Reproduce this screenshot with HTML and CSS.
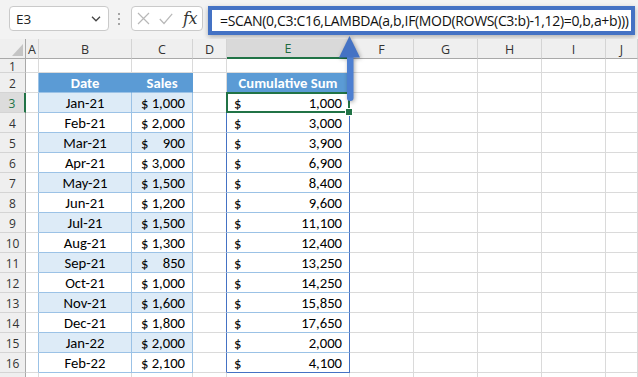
FILE: index.html
```html
<!DOCTYPE html>
<html>
<head>
<meta charset="utf-8">
<link rel="stylesheet" href="styles.css">
</head>
<body>
<div class="topbar">
  <div class="namebox"><span>E3</span>
    <svg class="chev" width="10" height="6" viewBox="0 0 10 6"><path d="M1 0.8 L5 4.8 L9 0.8" fill="none" stroke="#444" stroke-width="1.3"/></svg>
  </div>
  <div class="sep"><i></i><i></i><i></i></div>
  <div class="funcbox">
    <svg class="ico" width="13" height="13" viewBox="0 0 13 13"><path d="M1 1 L12 12 M12 1 L1 12" stroke="#b8b8b8" stroke-width="1.2" fill="none"/></svg>
    <svg class="ico chk" width="14" height="12" viewBox="0 0 14 12"><path d="M0.8 6 L5 10.5 L13.2 0.8" stroke="#b8b8b8" stroke-width="1.2" fill="none"/></svg>
    <span class="fx">fx</span>
  </div>
  <div class="formula">=SCAN(0,C3:C16,LAMBDA(a,b,IF(MOD(ROWS(C3:b)-1,12)=0,b,a+b)))</div>
</div>

<div class="sheet">
  <div class="c hd corner"><div class="tri"></div></div>
  <div class="c hd">A</div><div class="c hd">B</div><div class="c hd">C</div><div class="c hd">D</div><div class="c hd hsel">E</div><div class="c hd">F</div><div class="c hd">G</div><div class="c hd">H</div><div class="c hd">I</div><div class="c hd">J</div>

  <div class="c rh">1</div><div class="c"></div><div class="c"></div><div class="c"></div><div class="c"></div><div class="c"></div><div class="c"></div><div class="c"></div><div class="c"></div><div class="c"></div><div class="c"></div>

  <div class="c rh">2</div><div class="c tl"></div><div class="c th thb">Date</div><div class="c th">Sales</div><div class="c"></div><div class="c th">Cumulative Sum</div><div class="c"></div><div class="c"></div><div class="c"></div><div class="c"></div><div class="c"></div>

  <div class="c rh rsel">3</div><div class="c tl"></div><div class="c tb band">Jan-21</div><div class="c tb band acc ac"><span>$</span><span>1,000</span></div><div class="c el"></div><div class="c ec acc sel"><span>$</span><span>1,000</span></div><div class="c"></div><div class="c"></div><div class="c"></div><div class="c"></div><div class="c"></div>

  <div class="c rh">4</div><div class="c tl"></div><div class="c tb">Feb-21</div><div class="c tb acc ac"><span>$</span><span>2,000</span></div><div class="c el"></div><div class="c ec acc"><span>$</span><span>3,000</span></div><div class="c"></div><div class="c"></div><div class="c"></div><div class="c"></div><div class="c"></div>

  <div class="c rh">5</div><div class="c tl"></div><div class="c tb band">Mar-21</div><div class="c tb band acc ac"><span>$</span><span>900</span></div><div class="c el"></div><div class="c ec acc"><span>$</span><span>3,900</span></div><div class="c"></div><div class="c"></div><div class="c"></div><div class="c"></div><div class="c"></div>

  <div class="c rh">6</div><div class="c tl"></div><div class="c tb">Apr-21</div><div class="c tb acc ac"><span>$</span><span>3,000</span></div><div class="c el"></div><div class="c ec acc"><span>$</span><span>6,900</span></div><div class="c"></div><div class="c"></div><div class="c"></div><div class="c"></div><div class="c"></div>

  <div class="c rh">7</div><div class="c tl"></div><div class="c tb band">May-21</div><div class="c tb band acc ac"><span>$</span><span>1,500</span></div><div class="c el"></div><div class="c ec acc"><span>$</span><span>8,400</span></div><div class="c"></div><div class="c"></div><div class="c"></div><div class="c"></div><div class="c"></div>

  <div class="c rh">8</div><div class="c tl"></div><div class="c tb">Jun-21</div><div class="c tb acc ac"><span>$</span><span>1,200</span></div><div class="c el"></div><div class="c ec acc"><span>$</span><span>9,600</span></div><div class="c"></div><div class="c"></div><div class="c"></div><div class="c"></div><div class="c"></div>

  <div class="c rh">9</div><div class="c tl"></div><div class="c tb band">Jul-21</div><div class="c tb band acc ac"><span>$</span><span>1,500</span></div><div class="c el"></div><div class="c ec acc"><span>$</span><span>11,100</span></div><div class="c"></div><div class="c"></div><div class="c"></div><div class="c"></div><div class="c"></div>

  <div class="c rh">10</div><div class="c tl"></div><div class="c tb">Aug-21</div><div class="c tb acc ac"><span>$</span><span>1,300</span></div><div class="c el"></div><div class="c ec acc"><span>$</span><span>12,400</span></div><div class="c"></div><div class="c"></div><div class="c"></div><div class="c"></div><div class="c"></div>

  <div class="c rh">11</div><div class="c tl"></div><div class="c tb band">Sep-21</div><div class="c tb band acc ac"><span>$</span><span>850</span></div><div class="c el"></div><div class="c ec acc"><span>$</span><span>13,250</span></div><div class="c"></div><div class="c"></div><div class="c"></div><div class="c"></div><div class="c"></div>

  <div class="c rh">12</div><div class="c tl"></div><div class="c tb">Oct-21</div><div class="c tb acc ac"><span>$</span><span>1,000</span></div><div class="c el"></div><div class="c ec acc"><span>$</span><span>14,250</span></div><div class="c"></div><div class="c"></div><div class="c"></div><div class="c"></div><div class="c"></div>

  <div class="c rh">13</div><div class="c tl"></div><div class="c tb band">Nov-21</div><div class="c tb band acc ac"><span>$</span><span>1,600</span></div><div class="c el"></div><div class="c ec acc"><span>$</span><span>15,850</span></div><div class="c"></div><div class="c"></div><div class="c"></div><div class="c"></div><div class="c"></div>

  <div class="c rh">14</div><div class="c tl"></div><div class="c tb">Dec-21</div><div class="c tb acc ac"><span>$</span><span>1,800</span></div><div class="c el"></div><div class="c ec acc"><span>$</span><span>17,650</span></div><div class="c"></div><div class="c"></div><div class="c"></div><div class="c"></div><div class="c"></div>

  <div class="c rh">15</div><div class="c tl"></div><div class="c tb band">Jan-22</div><div class="c tb band acc ac"><span>$</span><span>2,000</span></div><div class="c el"></div><div class="c ec acc"><span>$</span><span>2,000</span></div><div class="c"></div><div class="c"></div><div class="c"></div><div class="c"></div><div class="c"></div>

  <div class="c rh">16</div><div class="c tl"></div><div class="c tb">Feb-22</div><div class="c tb acc ac"><span>$</span><span>2,100</span></div><div class="c el"></div><div class="c ec ecl acc"><span>$</span><span>4,100</span></div><div class="c"></div><div class="c"></div><div class="c"></div><div class="c"></div><div class="c"></div>

  <div class="c rh"></div><div class="c"></div><div class="c"></div><div class="c"></div><div class="c"></div><div class="c"></div><div class="c"></div><div class="c"></div><div class="c"></div><div class="c"></div><div class="c"></div>
</div>

<svg class="arrow" width="32" height="72" viewBox="0 0 32 72">
  <rect x="11" y="20" width="6.5" height="47" rx="3" fill="#4d7fd1"/>
  <polygon points="13.5,2 3,23.5 24,23.5" fill="#4472c4"/>
</svg>
</body>
</html>
```

FILE: styles.css
```css
html, body {
  margin: 0;
  padding: 0;
}
body {
  width: 638px;
  height: 377px;
  overflow: hidden;
  background: #ffffff;
  position: relative;
  font-family: Carlito, Calibri, Lato, "Liberation Sans", sans-serif;
}

/* ---------- top bar ---------- */
.topbar {
  display: flex;
  align-items: flex-start;
  height: 39px;
  box-sizing: border-box;
  padding-top: 6px;
  background: #f3f3f3;
}
.namebox {
  margin-left: 9px;
  width: 100px;
  height: 25px;
  box-sizing: border-box;
  border: 1px solid #cacaca;
  border-radius: 4px;
  background: #fff;
  display: flex;
  align-items: center;
  justify-content: space-between;
  padding: 0 7px 0 6px;
  font-family: "Open Sans", "Noto Sans", sans-serif;
  font-size: 13.5px;
  color: #222;
}
.sep {
  margin-left: 9px;
  height: 25px;
  width: 3px;
  display: flex;
  flex-direction: column;
  justify-content: center;
  gap: 3px;
}
.sep i {
  display: block;
  width: 2px;
  height: 2px;
  background: #8a8a8a;
  border-radius: 1px;
}
.funcbox {
  margin-left: 10px;
  width: 72px;
  height: 25px;
  box-sizing: border-box;
  border: 1px solid #cacaca;
  border-radius: 4px;
  background: #fff;
  display: flex;
  align-items: center;
  padding-left: 5px;
}
.ico { display: block; }
.chk { margin-left: 9px; }
.fx {
  margin-left: 10px;
  font-family: "DejaVu Serif", "Liberation Serif", serif;
  font-style: italic;
  font-size: 16px;
  color: #333;
  letter-spacing: -0.5px;
}
.formula {
  margin-left: 5px;
  width: 427px;
  height: 29px;
  box-sizing: border-box;
  border: 4px solid #4472c4;
  background: #fff;
  box-shadow: 0 2px 5px rgba(0,0,0,0.28);
  display: flex;
  align-items: center;
  padding-left: 8px;
  font-family: "Open Sans", "Noto Sans", sans-serif;
  font-size: 14px;
  letter-spacing: -0.33px;
  color: #111;
  white-space: nowrap;
  overflow: hidden;
}

/* ---------- sheet ---------- */
.sheet {
  display: grid;
  grid-template-columns: 26px 13px 93px 61px 34px 123px 64px 64px 64px 64px 32px;
  grid-template-rows: 20px 14px repeat(16, 20px);
}
.c {
  box-sizing: border-box;
  border-right: 1px solid #dadada;
  border-bottom: 1px solid #dadada;
  display: flex;
  align-items: center;
  justify-content: center;
  font-size: 14.67px;
  color: #000;
  white-space: nowrap;
  position: relative;
  padding-top: 1px;
}
.hd {
  background: #efefef;
  border-right-color: #d4d4d4;
  border-bottom-color: #a9a9a9;
  font-family: "Open Sans", "Noto Sans", sans-serif;
  font-size: 12.5px;
  color: #333;
}
.corner {
  justify-content: flex-end;
  align-items: flex-end;
  padding: 0 2px 2px 0;
  border-right-color: #a9a9a9;
}
.tri {
  width: 0;
  height: 0;
  border-left: 11px solid transparent;
  border-bottom: 12px solid #c4c4c4;
}
.hsel {
  background: #d9d9d9;
  color: #1d6b3f;
  border-bottom: 2px solid #217346;
}
.rh {
  background: #efefef;
  border-right-color: #a9a9a9;
  border-bottom-color: #d4d4d4;
  font-family: "Open Sans", "Noto Sans", sans-serif;
  font-size: 12px;
  color: #333;
}
.rsel {
  background: #dcdcdc;
  color: #217346;
  border-right: 2px solid #217346;
}

/* table B:C */
.tl { border-right-color: #9bc2e6; }
.th {
  background: #5b9bd5;
  color: #fff;
  font-weight: bold;
  border-right-color: #5b9bd5;
  border-bottom-color: #9bc2e6;
}
.tb {
  border-right-color: #9bc2e6;
  border-bottom-color: #9bc2e6;
}
.band { background: #ddebf7; }
.acc {
  justify-content: space-between;
  padding-left: 7px;
  padding-right: 7px;
}
.ac { padding-left: 9px; }

/* column E */
.el { border-right-color: #4472c4; }
.ec {
  border-right-color: #4472c4;
  border-bottom-color: #9bc2e6;
}
.ecl { border-bottom-color: #4472c4; }

.sel::after {
  content: "";
  position: absolute;
  left: -1px;
  top: -1px;
  right: -1px;
  bottom: -1px;
  border: 2px solid #217346;
  box-sizing: border-box;
}
.sel::before {
  content: "";
  position: absolute;
  right: -4px;
  bottom: -4px;
  width: 6px;
  height: 6px;
  background: #217346;
  border: 1px solid #fff;
  z-index: 2;
}

.arrow {
  position: absolute;
  left: 336px;
  top: 34px;
  filter: drop-shadow(1px 1px 2px rgba(0,0,0,0.35));
}
```
